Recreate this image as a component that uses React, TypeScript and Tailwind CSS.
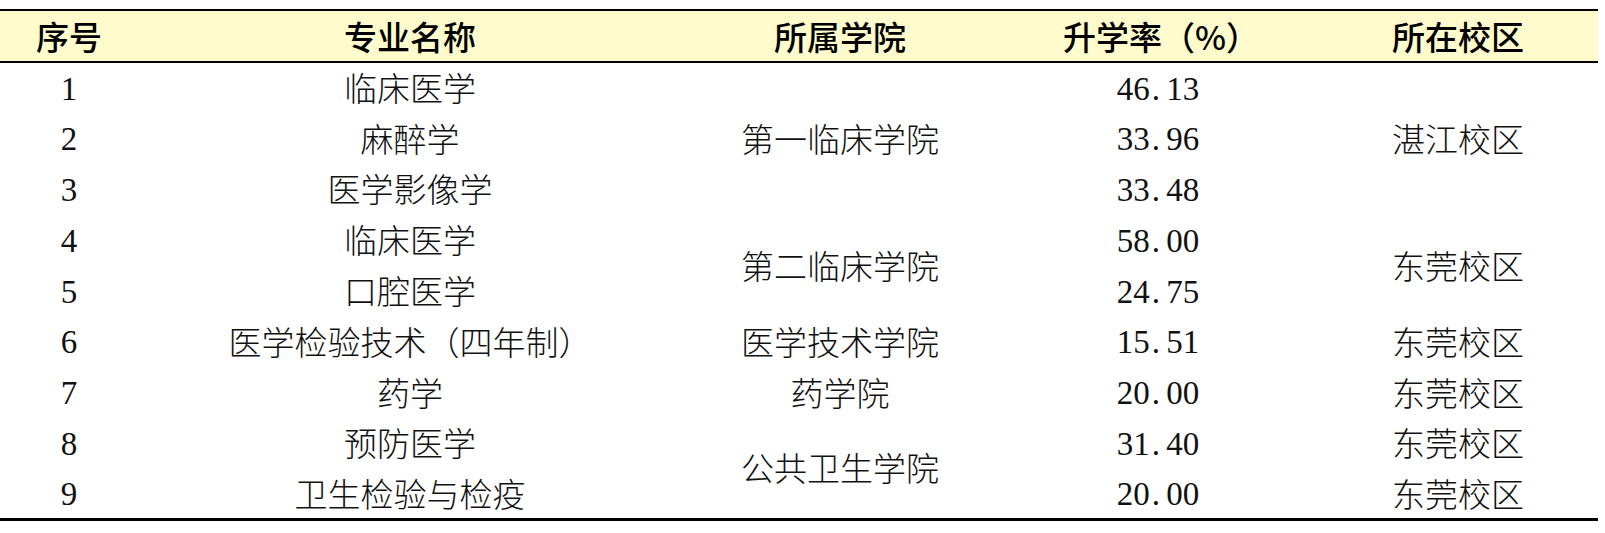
import React from "react";

type Row = {
  no: string;
  major: string;
  college?: { text: string; span: number };
  rate: string;
  campus?: { text: string; span: number };
};

const rows: Row[] = [
  { no: "1", major: "临床医学", college: { text: "第一临床学院", span: 3 }, rate: "46.13", campus: { text: "湛江校区", span: 3 } },
  { no: "2", major: "麻醉学", rate: "33.96" },
  { no: "3", major: "医学影像学", rate: "33.48" },
  { no: "4", major: "临床医学", college: { text: "第二临床学院", span: 2 }, rate: "58.00", campus: { text: "东莞校区", span: 2 } },
  { no: "5", major: "口腔医学", rate: "24.75" },
  { no: "6", major: "医学检验技术（四年制）", college: { text: "医学技术学院", span: 1 }, rate: "15.51", campus: { text: "东莞校区", span: 1 } },
  { no: "7", major: "药学", college: { text: "药学院", span: 1 }, rate: "20.00", campus: { text: "东莞校区", span: 1 } },
  { no: "8", major: "预防医学", college: { text: "公共卫生学院", span: 2 }, rate: "31.40", campus: { text: "东莞校区", span: 1 } },
  { no: "9", major: "卫生检验与检疫", rate: "20.00", campus: { text: "东莞校区", span: 1 } },
];

function Num({ v }: { v: string }) {
  const parts = v.split(".");
  if (parts.length === 1) return <span className="font-['Liberation_Serif']">{v}</span>;
  return (
    <span className="font-['Liberation_Serif']">
      {parts[0]}
      <span className="inline-block w-[0.5em] text-left pl-[0.06em]">.</span>
      {parts[1]}
    </span>
  );
}

export default function App() {
  return (
    <div className="w-[1605px] h-[533px] bg-white pt-[9px] text-[#111] font-['Noto_Sans_CJK_SC']">
      <table className="w-[1598px] table-fixed border-collapse border-b-[3px] border-b-black text-[33px] leading-none">
        <colgroup>
          <col className="w-[138px]" />
          <col className="w-[544px]" />
          <col className="w-[316px]" />
          <col className="w-[320px]" />
          <col className="w-[280px]" />
        </colgroup>
        <thead>
          <tr className="h-[52px] bg-[#FFFBCC] border-t-2 border-b-2 border-black text-black">
            <th className="font-medium text-center align-middle">序号</th>
            <th className="font-medium text-center align-middle">专业名称</th>
            <th className="font-medium text-center align-middle">所属学院</th>
            <th className="font-medium text-center align-middle pl-[6px]">升学率（%）</th>
            <th className="font-medium text-center align-middle">所在校区</th>
          </tr>
        </thead>
        <tbody>
          {rows.map((r) => (
            <tr key={r.no} className="h-[50.8px]">
              <td className="text-center align-middle">
                <Num v={r.no} />
              </td>
              <td className="font-light text-center align-middle">{r.major}</td>
              {r.college && (
                <td rowSpan={r.college.span} className="font-light text-center align-middle">
                  {r.college.text}
                </td>
              )}
              <td className="text-center align-middle">
                <Num v={r.rate} />
              </td>
              {r.campus && (
                <td rowSpan={r.campus.span} className="font-light text-center align-middle">
                  {r.campus.text}
                </td>
              )}
            </tr>
          ))}
        </tbody>
      </table>
    </div>
  );
}
